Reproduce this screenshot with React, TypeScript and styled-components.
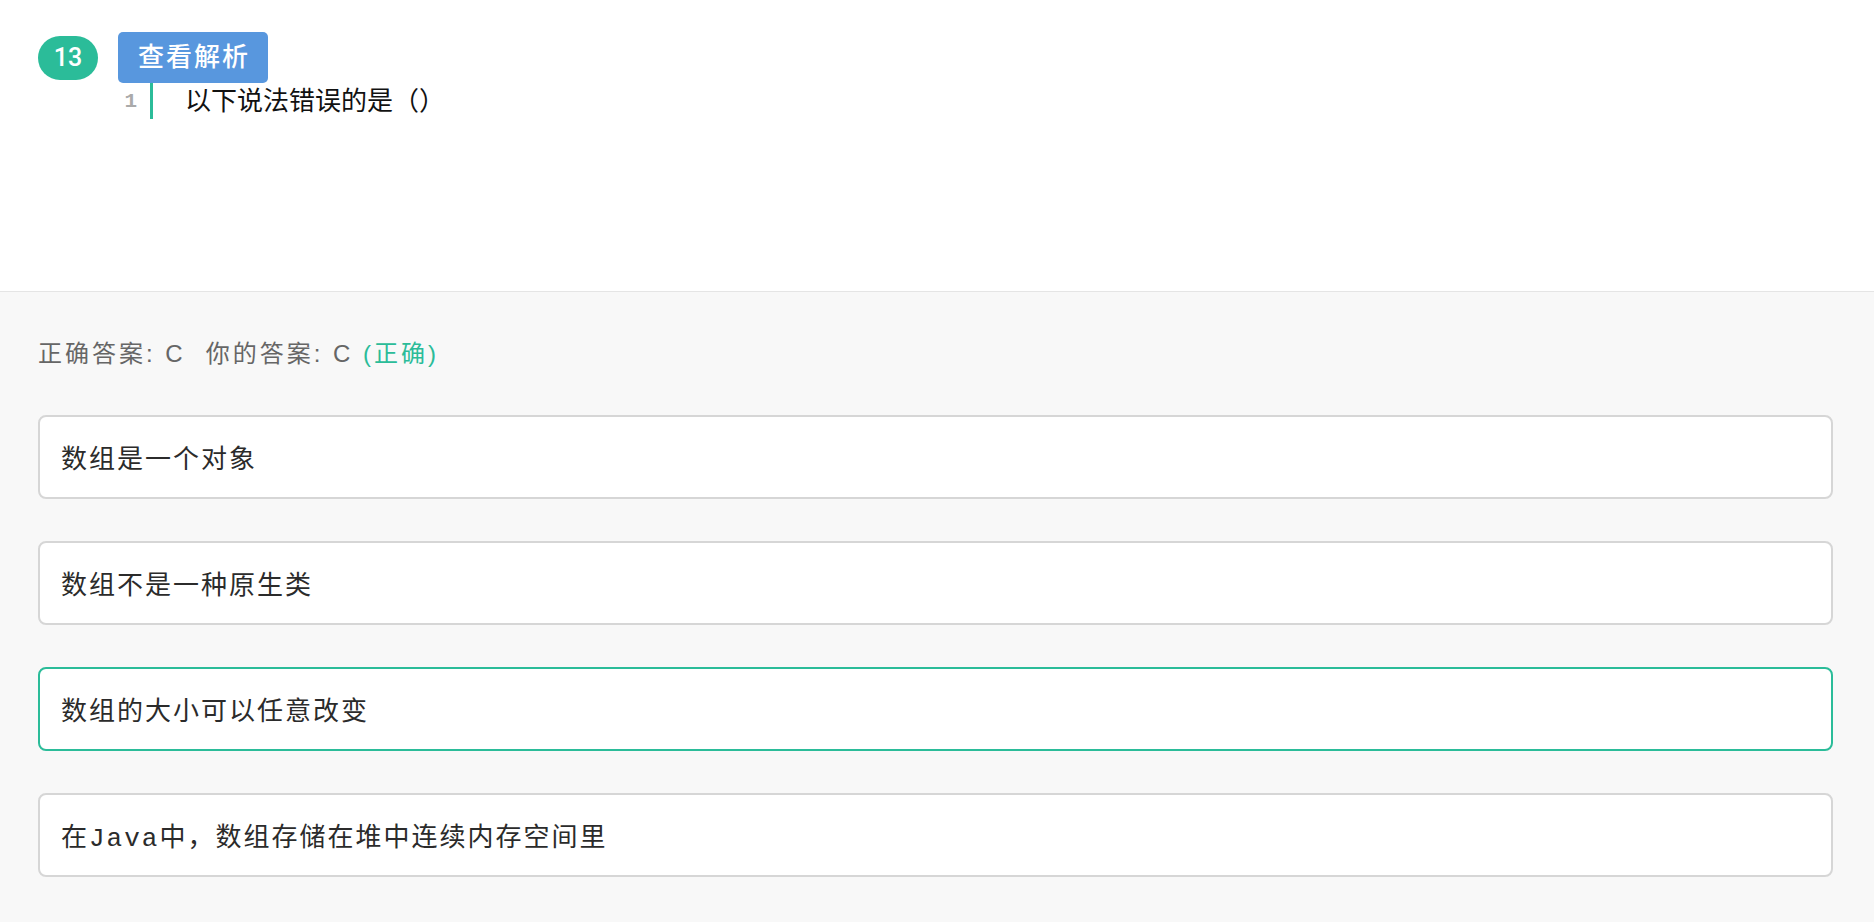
import React from "react";
import styled, { createGlobalStyle } from "styled-components";

type Option = {
  label: string;
  text: string;
};

const GlobalStyle = createGlobalStyle`
  html, body {
    margin: 0;
    padding: 0;
    background: #fff;
  }

  body {
    font-family: "Liberation Sans", "Noto Sans CJK SC", sans-serif;
  }
`;

const options: Option[] = [
  { label: "A", text: "数组是一个对象" },
  { label: "B", text: "数组不是一种原生类" },
  { label: "C", text: "数组的大小可以任意改变" },
  { label: "D", text: "在Java中，数组存储在堆中连续内存空间里" },
];

const correct = "C";
const mine = "C";

export default function App() {
  return (
    <>
      <GlobalStyle />
      <Page>
        <QuestionArea>
          <Header>
            <Badge>13</Badge>
            <ExplainButton>查看解析</ExplainButton>
          </Header>
          <CodeBlock>
            <LineNo>1</LineNo>
            <LineText>以下说法错误的是（）</LineText>
          </CodeBlock>
        </QuestionArea>

        <AnswerArea>
          <AnswerLine>
            正确答案: {correct}
            <Mine>你的答案: {mine}</Mine>{" "}
            <Result>(正确)</Result>
          </AnswerLine>
          <OptionList>
            {options.map((opt) => (
              <OptionItem key={opt.label} $selected={opt.label === mine}>
                {opt.text}
              </OptionItem>
            ))}
          </OptionList>
        </AnswerArea>
      </Page>
    </>
  );
}

const Page = styled.div`
  min-height: 100vh;
  display: flex;
  flex-direction: column;
`;

const QuestionArea = styled.section`
  height: 292px;
  box-sizing: border-box;
  padding: 32px 0 0 38px;
  border-bottom: 1px solid #e5e5e5;
  background: #fff;
`;

const Header = styled.div`
  display: flex;
  align-items: center;
  gap: 20px;
`;

const Badge = styled.span`
  display: inline-flex;
  align-items: center;
  justify-content: center;
  width: 60px;
  height: 44px;
  border-radius: 22px;
  background: #2bbc99;
  color: #fff;
  font-size: 25px;
  font-weight: 500;
  font-family: Roboto, "Liberation Sans", sans-serif;
`;

const ExplainButton = styled.button`
  height: 51px;
  padding: 0 18px 0 20px;
  border: none;
  border-radius: 5px;
  background: #5897de;
  color: #fff;
  font-family: "Liberation Sans", "Noto Sans CJK SC", sans-serif;
  font-size: 26px;
  font-weight: 500;
  letter-spacing: 2px;
  line-height: 51px;
  cursor: pointer;
`;

const CodeBlock = styled.div`
  display: flex;
  margin-left: 80px;
  height: 36px;
`;

const LineNo = styled.div`
  width: 35px;
  box-sizing: border-box;
  padding-right: 13px;
  border-right: 3px solid #2bbc99;
  text-align: right;
  color: #aaa;
  font-family: "Liberation Mono", monospace;
  font-size: 21px;
  font-weight: bold;
  line-height: 38px;
`;

const LineText = styled.div`
  padding-left: 32px;
  color: #111;
  font-size: 26px;
  line-height: 36px;
`;

const AnswerArea = styled.section`
  flex: 1;
  background: #f8f8f8;
  padding: 47px 41px 40px 38px;
`;

const AnswerLine = styled.div`
  color: #666;
  font-size: 24px;
  letter-spacing: 3px;
  line-height: 30px;
`;

const Mine = styled.span`
  margin-left: 20px;
`;

const Result = styled.span`
  color: #2bbc99;
`;

const OptionList = styled.div`
  display: flex;
  flex-direction: column;
  gap: 42px;
  margin-top: 46px;
`;

const OptionItem = styled.div<{ $selected?: boolean }>`
  height: 84px;
  box-sizing: border-box;
  display: flex;
  align-items: center;
  padding-left: 21px;
  border: 2px solid ${(p) => (p.$selected ? "#2bbc99" : "#d6d6d6")};
  border-radius: 8px;
  background: #fff;
  color: #2b2b2b;
  font-family: "Liberation Mono", "Noto Sans CJK SC", monospace;
  font-size: 26px;
  letter-spacing: 2px;
`;
